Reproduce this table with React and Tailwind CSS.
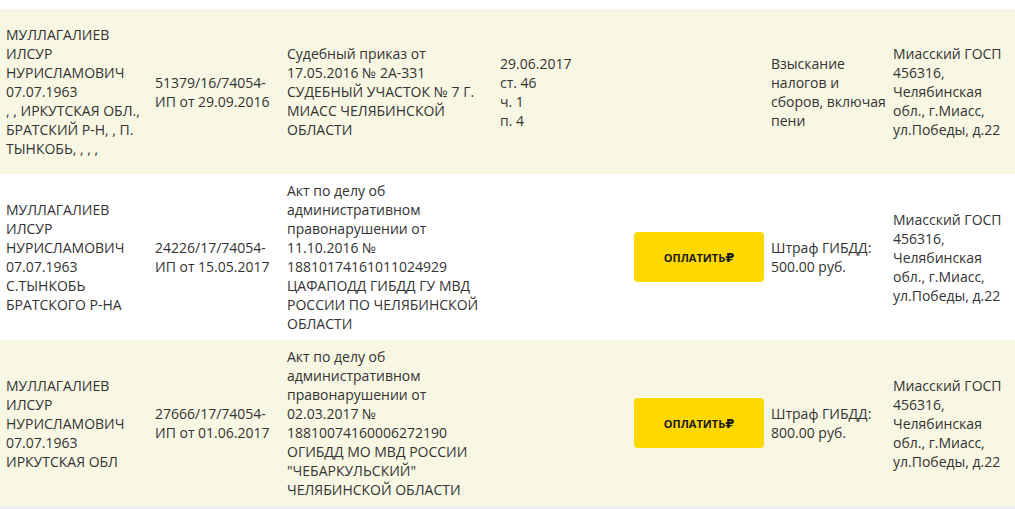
import React from 'react';

const rows = [
  {
    bg: 'bg-[#f8f7e4]',
    debtor: ['МУЛЛАГАЛИЕВ', 'ИЛСУР', 'НУРИСЛАМОВИЧ', '07.07.1963', ', , ИРКУТСКАЯ ОБЛ.,', 'БРАТСКИЙ Р-Н, , П.', 'ТЫНКОБЬ, , , ,'],
    proceeding: ['51379/16/74054-', 'ИП от 29.09.2016'],
    document: ['Судебный приказ от', '17.05.2016 № 2А-331', 'СУДЕБНЫЙ УЧАСТОК № 7 Г.', 'МИАСС ЧЕЛЯБИНСКОЙ', 'ОБЛАСТИ'],
    ended: ['29.06.2017', 'ст. 46', 'ч. 1', 'п. 4'],
    pay: false,
    subject: ['Взыскание', 'налогов и', 'сборов, включая', 'пени'],
  },
  {
    bg: 'bg-white',
    debtor: ['МУЛЛАГАЛИЕВ', 'ИЛСУР', 'НУРИСЛАМОВИЧ', '07.07.1963', 'С.ТЫНКОБЬ', 'БРАТСКОГО Р-НА'],
    proceeding: ['24226/17/74054-', 'ИП от 15.05.2017'],
    document: ['Акт по делу об', 'административном', 'правонарушении от', '11.10.2016 №', '18810174161011024929', 'ЦАФАПОДД ГИБДД ГУ МВД', 'РОССИИ ПО ЧЕЛЯБИНСКОЙ', 'ОБЛАСТИ'],
    ended: [],
    pay: true,
    subject: ['Штраф ГИБДД:', '500.00 руб.'],
  },
  {
    bg: 'bg-[#f8f7e4]',
    debtor: ['МУЛЛАГАЛИЕВ', 'ИЛСУР', 'НУРИСЛАМОВИЧ', '07.07.1963', 'ИРКУТСКАЯ ОБЛ'],
    proceeding: ['27666/17/74054-', 'ИП от 01.06.2017'],
    document: ['Акт по делу об', 'административном', 'правонарушении от', '02.03.2017 №', '18810074160006272190', 'ОГИБДД МО МВД РОССИИ', '"ЧЕБАРКУЛЬСКИЙ"', 'ЧЕЛЯБИНСКОЙ ОБЛАСТИ'],
    ended: [],
    pay: true,
    subject: ['Штраф ГИБДД:', '800.00 руб.'],
  },
];

const department = ['Миасский ГОСП', '456316,', 'Челябинская', 'обл., г.Миасс,', 'ул.Победы, д.22'];

const Lines = ({ lines }) =>
  lines.map((line, i) => (
    <React.Fragment key={i}>
      {line}
      {i < lines.length - 1 && <br />}
    </React.Fragment>
  ));

const cell = 'px-[5px] py-[7px] align-middle whitespace-nowrap';

const App = () => {
  return (
    <div className="w-[1015px] h-[509px] overflow-hidden bg-white pt-[9px] text-[14px] leading-[19px] text-[#333333]" style={{ fontFamily: '"Open Sans", "Liberation Sans", sans-serif' }}>
      <table className="w-[1015px] table-fixed border-collapse border-b-[3px] border-[#eeeeee]">
        <colgroup>
          <col className="w-[150px]" />
          <col className="w-[132px]" />
          <col className="w-[213px]" />
          <col className="w-[134px]" />
          <col className="w-[137px]" />
          <col className="w-[122px]" />
          <col className="w-[127px]" />
        </colgroup>
        <tbody>
          {rows.map((row, idx) => (
            <tr key={idx} className={`${row.bg} h-[165px]`}>
              <td className={`${cell} pl-[6px]`}><Lines lines={row.debtor} /></td>
              <td className={cell}><Lines lines={row.proceeding} /></td>
              <td className={cell}><Lines lines={row.document} /></td>
              <td className={cell}><Lines lines={row.ended} /></td>
              <td className={cell}>
                {row.pay && (
                  <button className="flex h-[50px] w-[130px] items-center justify-center rounded-[4px] bg-[#ffd800] text-[11px] font-bold leading-none text-[#1a1a1a]">
                    ОПЛАТИТЬ
                    <span className="text-[13px] font-bold" style={{ fontFamily: '"DejaVu Sans", sans-serif' }}>₽</span>
                  </button>
                )}
              </td>
              <td className={cell}><Lines lines={row.subject} /></td>
              <td className={cell}><Lines lines={department} /></td>
            </tr>
          ))}
        </tbody>
      </table>
    </div>
  );
};

export default App;
